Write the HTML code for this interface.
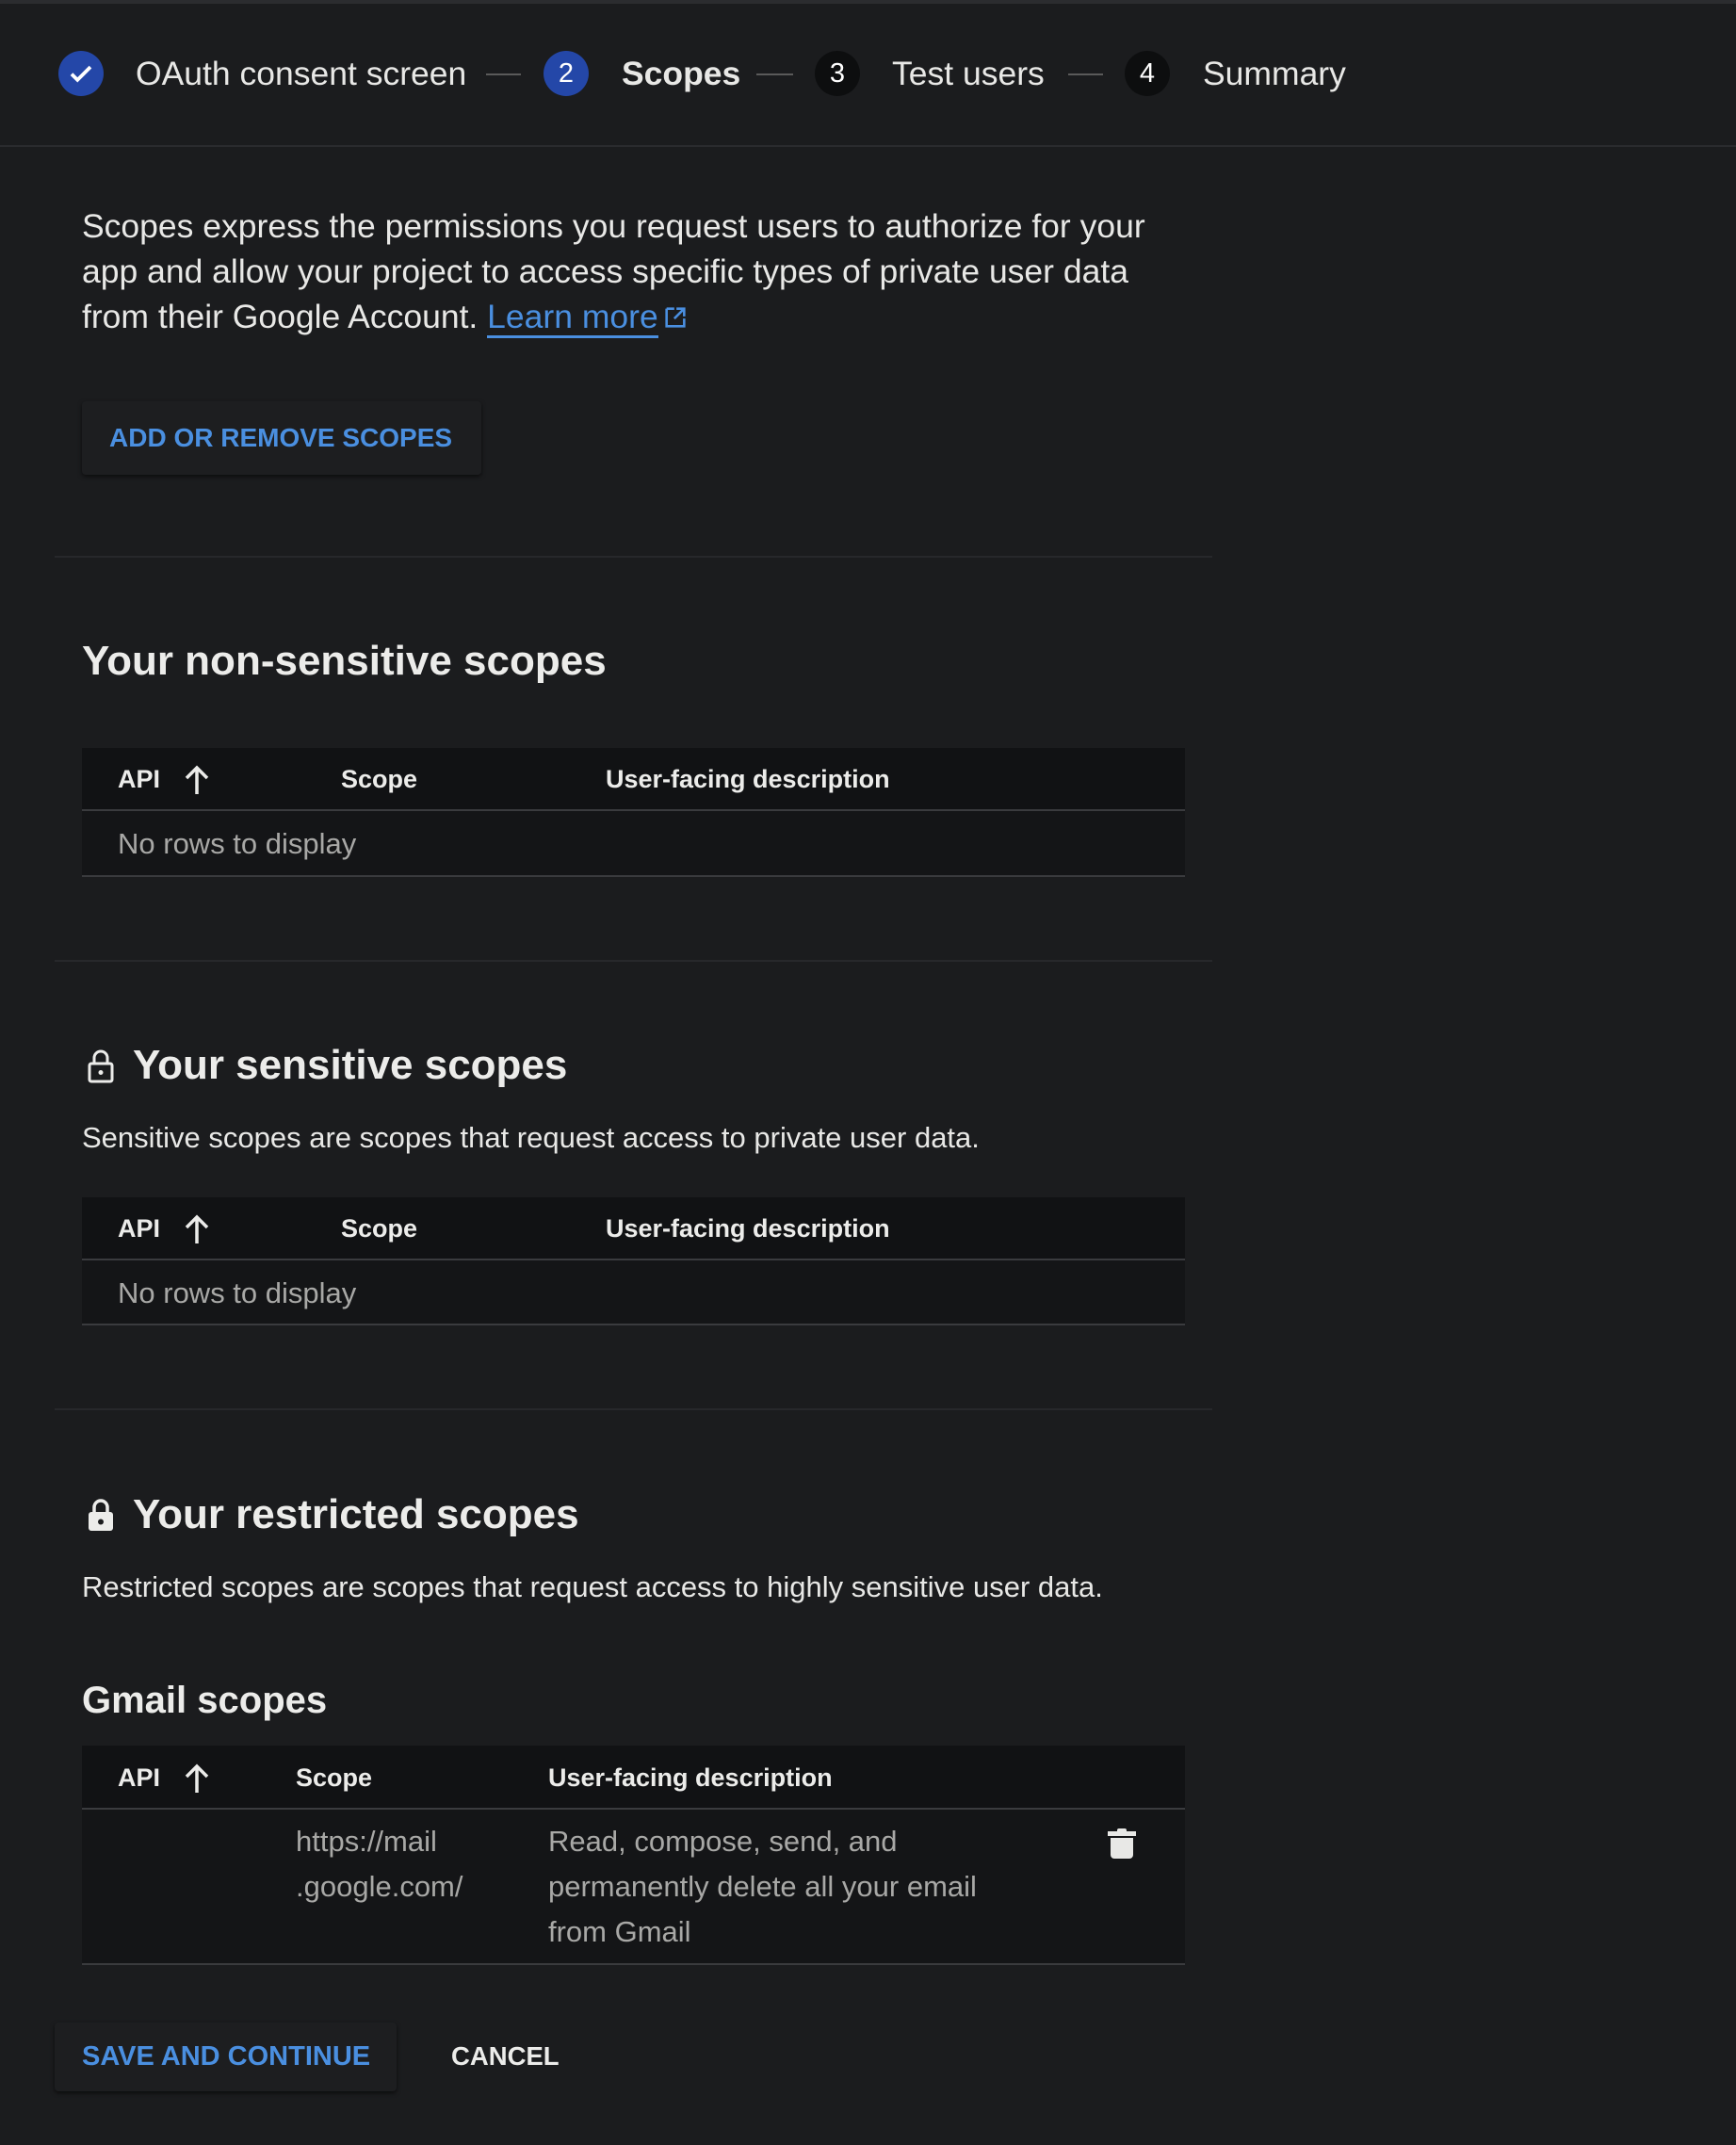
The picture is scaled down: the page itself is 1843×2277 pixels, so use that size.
<!DOCTYPE html>
<html><head><meta charset="utf-8"><style>
*{margin:0;padding:0;box-sizing:border-box}
body{width:1843px;height:2277px;background:#1b1c1e;font-family:"Liberation Sans",Arial,sans-serif;color:#e8e8e6;position:relative;overflow:hidden}
.a{position:absolute;white-space:nowrap}
.c{line-height:1}
.circ{position:absolute;width:48px;height:48px;border-radius:50%;color:#fff;font-size:29px;display:flex;align-items:center;justify-content:center}
.dash{position:absolute;height:2px;background:#5a5a5a;top:78px}
.div{position:absolute;left:58px;width:1229px;height:2px;background:#27282b}
.tbl{position:absolute;left:87px;width:1171px;background:#141517}
.th{position:absolute;left:0;width:100%;background:#111214;border-bottom:2px solid #3a3b3e}
.hd{font-size:27px;font-weight:bold;color:#ececea}
.rw{font-size:31px;color:#a8a8a6}
h2{position:absolute;font-size:44px;font-weight:bold;white-space:nowrap;color:#ececea}
.p{font-size:31px;color:#e8e8e6}
</style></head><body>
<div class="a" style="left:0;top:0;width:1843px;height:4px;background:#2b2c2f"></div>
<div class="circ" style="left:62px;top:54px;background:#2447a8">
<svg width="30" height="30" viewBox="0 0 24 24"><path d="M4 12.5l5 5L20 6.5" stroke="#fff" stroke-width="3" fill="none"/></svg></div>
<div class="a" style="left:144px;top:58px;font-size:35.5px">OAuth consent screen</div>
<div class="dash" style="left:516px;width:37px"></div>
<div class="circ" style="left:577px;top:54px;background:#2447a8">2</div>
<div class="a" style="left:660px;top:58px;font-size:35.5px;font-weight:bold">Scopes</div>
<div class="dash" style="left:803px;width:39px"></div>
<div class="circ" style="left:865px;top:54px;background:#0d0e0f">3</div>
<div class="a" style="left:947px;top:58px;font-size:35.5px">Test users</div>
<div class="dash" style="left:1134px;width:37px"></div>
<div class="circ" style="left:1194px;top:54px;background:#0d0e0f">4</div>
<div class="a" style="left:1277px;top:58px;font-size:35.5px">Summary</div>
<div class="a" style="left:0;top:154px;width:1843px;height:2px;background:#2a2b2e"></div>

<div class="a p" style="left:87px;top:216px;font-size:35.5px;line-height:48px">Scopes express the permissions you request users to authorize for your<br>app and allow your project to access specific types of private user data<br>from their Google Account. <span style="color:#4a8fe0;border-bottom:3px solid #4a8fe0">Learn more</span><svg width="28" height="28" viewBox="0 0 24 24" style="vertical-align:-3px;margin-left:4px"><path d="M4 4h7M4 4v16h16v-7M13 4h7v7M20 4l-9 9" stroke="#4a8fe0" stroke-width="2.2" fill="none"/></svg></div>

<div class="a" style="left:87px;top:426px;width:424px;height:78px;background:#1d1e20;border-radius:4px;box-shadow:0 2px 5px rgba(0,0,0,.6)"></div>
<div class="a c" style="left:116px;top:451px;font-size:28px;font-weight:bold;color:#4a8fe0">ADD OR REMOVE SCOPES</div>

<div class="div" style="top:590px"></div>
<h2 style="left:87px;top:677px">Your non-sensitive scopes</h2>
<div class="tbl" style="top:794px;height:137px;border-bottom:2px solid #3a3b3e">
<div class="th" style="top:0;height:67px"></div>
<div class="a c hd" style="left:38px;top:20px">API</div>
<svg class="a" style="left:106px;top:17px" width="32" height="34" viewBox="0 0 32 34"><path d="M16 32V4M5 15L16 4l11 11" stroke="#ececea" stroke-width="3.5" fill="none"/></svg>
<div class="a c hd" style="left:275px;top:20px">Scope</div>
<div class="a c hd" style="left:556px;top:20px">User-facing description</div>
<div class="a c rw" style="left:38px;top:86px">No rows to display</div>
</div>

<div class="div" style="top:1019px"></div>
<svg class="a" style="left:91px;top:1113px" width="32" height="38" viewBox="0 0 32 38"><rect x="4" y="16" width="24" height="19" rx="2" stroke="#ececea" stroke-width="3" fill="none"/><path d="M9 16V10a7 7 0 0 1 14 0v6" stroke="#ececea" stroke-width="3" fill="none"/><circle cx="16" cy="25.5" r="2.5" fill="#ececea"/></svg>
<h2 style="left:141px;top:1106px">Your sensitive scopes</h2>
<div class="a c p" style="left:87px;top:1192px">Sensitive scopes are scopes that request access to private user data.</div>
<div class="tbl" style="top:1271px;height:136px;border-bottom:2px solid #3a3b3e">
<div class="th" style="top:0;height:67px"></div>
<div class="a c hd" style="left:38px;top:20px">API</div>
<svg class="a" style="left:106px;top:17px" width="32" height="34" viewBox="0 0 32 34"><path d="M16 32V4M5 15L16 4l11 11" stroke="#ececea" stroke-width="3.5" fill="none"/></svg>
<div class="a c hd" style="left:275px;top:20px">Scope</div>
<div class="a c hd" style="left:556px;top:20px">User-facing description</div>
<div class="a c rw" style="left:38px;top:86px">No rows to display</div>
</div>

<div class="div" style="top:1495px"></div>
<svg class="a" style="left:91px;top:1590px" width="32" height="38" viewBox="0 0 32 38"><rect x="3" y="15" width="26" height="20" rx="3" fill="#ececea"/><path d="M9 16V10a7 7 0 0 1 14 0v6" stroke="#ececea" stroke-width="3.5" fill="none"/><circle cx="16" cy="25.5" r="3" fill="#1b1c1e"/></svg>
<h2 style="left:141px;top:1583px">Your restricted scopes</h2>
<div class="a c p" style="left:87px;top:1669px">Restricted scopes are scopes that request access to highly sensitive user data.</div>
<div class="a c" style="left:87px;top:1785px;font-size:40px;font-weight:bold;color:#ececea">Gmail scopes</div>
<div class="tbl" style="top:1853px;height:233px;border-bottom:2px solid #3a3b3e">
<div class="th" style="top:0;height:68px"></div>
<div class="a c hd" style="left:38px;top:21px">API</div>
<svg class="a" style="left:106px;top:18px" width="32" height="34" viewBox="0 0 32 34"><path d="M16 32V4M5 15L16 4l11 11" stroke="#ececea" stroke-width="3.5" fill="none"/></svg>
<div class="a c hd" style="left:227px;top:21px">Scope</div>
<div class="a c hd" style="left:495px;top:21px">User-facing description</div>
<div class="a rw" style="left:227px;top:78px;line-height:48px">https://mail<br>.google.com/</div>
<div class="a rw" style="left:495px;top:78px;line-height:48px">Read, compose, send, and<br>permanently delete all your email<br>from Gmail</div>
<svg class="a" style="left:1088px;top:86px" width="32" height="36" viewBox="0 0 32 36"><rect x="1" y="5" width="30" height="5" fill="#e8e8e6"/><rect x="11" y="2" width="10" height="5" rx="2" fill="#e8e8e6"/><path d="M4 12h24v18a4 4 0 0 1-4 4H8a4 4 0 0 1-4-4z" fill="#e8e8e6"/></svg>
</div>

<div class="a" style="left:58px;top:2147px;width:363px;height:73px;background:#1d1e20;border-radius:4px;box-shadow:0 2px 5px rgba(0,0,0,.6)"></div>
<div class="a c" style="left:87px;top:2169px;font-size:29px;font-weight:bold;color:#4a8fe0">SAVE AND CONTINUE</div>
<div class="a c" style="left:479px;top:2169px;font-size:27.5px;font-weight:bold;color:#ececea">CANCEL</div>
</body></html>
